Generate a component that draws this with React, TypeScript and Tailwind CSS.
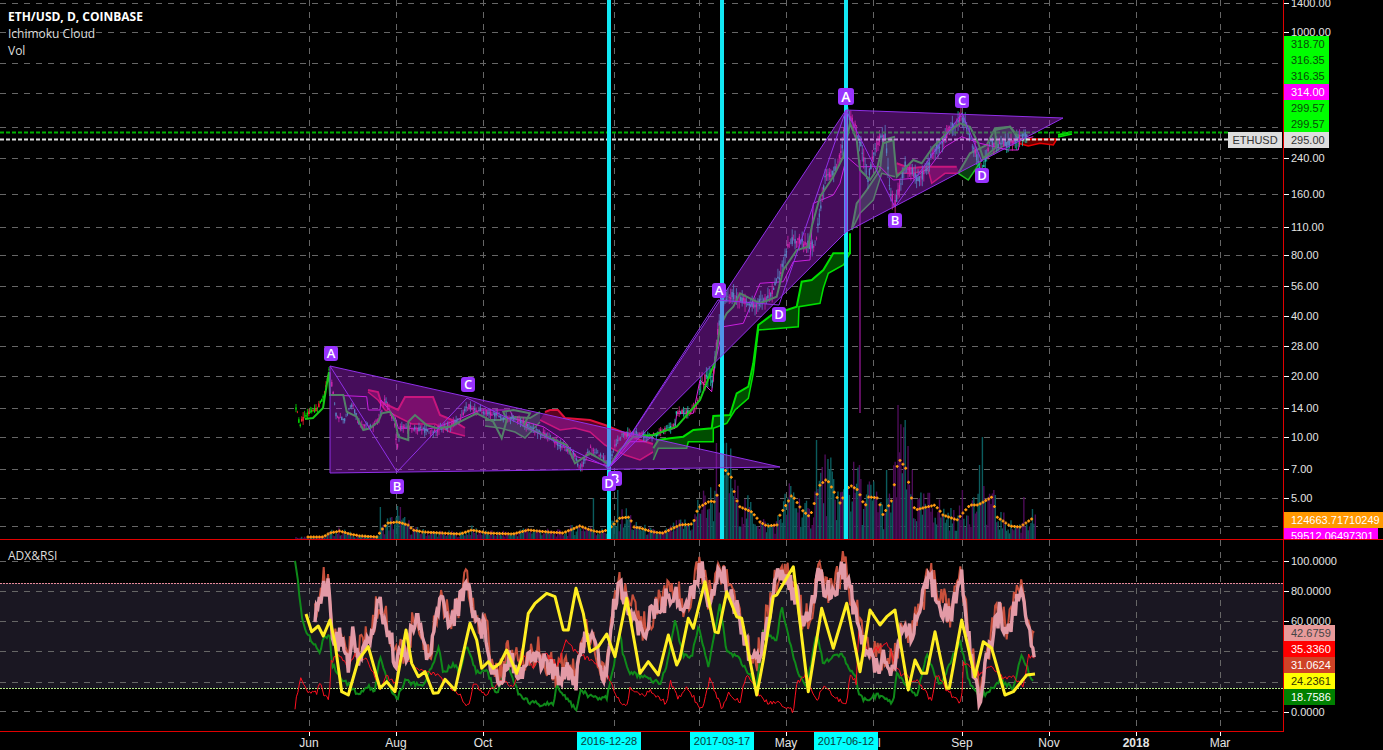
import { useMemo } from 'react';

type Pt = [number, number];

const PRICE_TICKS: [string, number][] = [
  ['1400.00', 3], ['1000.00', 32], ['240.00', 158], ['160.00', 194], ['110.00', 227], ['80.00', 255],
  ['56.00', 286], ['40.00', 316], ['28.00', 346], ['20.00', 376], ['14.00', 408], ['10.00', 437],
  ['7.00', 469], ['5.00', 498],
];
const PRICE_GRID = [3, 32, 63, 93, 127, 158, 194, 227, 255, 286, 316, 346, 376, 408, 437, 469, 498, 526];
const TIME_GRID = [309, 396, 483, 614, 699, 786, 873, 962, 1049, 1136, 1220];
const INDICATOR_TICKS: [string, number][] = [['100.0000', 561], ['80.0000', 591], ['60.0000', 621], ['0.0000', 712]];
const INDICATOR_GRID = [561, 591, 621, 651, 682, 711];
const TIME_LABELS: [string, number, boolean][] = [
  ['Jun', 309, false], ['Aug', 396, false], ['Oct', 483, false], ['May', 786, false], ['Jul', 873, false],
  ['Sep', 962, false], ['Nov', 1049, false], ['2018', 1136, true], ['Mar', 1220, false],
];
const TIME_TAGS: [string, number][] = [['2016-12-28', 577], ['2017-03-17', 690], ['2017-06-12', 814]];
const CYAN_LINES = [609, 722, 846];

const PRICE_TAGS = [
  { text: '318.70', top: 36, bg: 'bg-[#00ff00]', fg: 'text-[#0a4a0a]' },
  { text: '316.35', top: 52, bg: 'bg-[#00ff00]', fg: 'text-[#0a4a0a]' },
  { text: '316.35', top: 68, bg: 'bg-[#00ff00]', fg: 'text-[#0a4a0a]' },
  { text: '314.00', top: 84, bg: 'bg-[#ff00ff]', fg: 'text-white' },
  { text: '299.57', top: 100, bg: 'bg-[#00ff00]', fg: 'text-[#0a4a0a]' },
  { text: '299.57', top: 116, bg: 'bg-[#00ff00]', fg: 'text-[#0a4a0a]' },
  { text: '295.00', top: 132, bg: 'bg-[#dedede]', fg: 'text-[#333333]' },
];
const INDICATOR_TAGS = [
  { text: '42.6759', top: 85, bg: 'bg-[#e89a9a]', fg: 'text-[#444444]' },
  { text: '35.3360', top: 101, bg: 'bg-[#ff0000]', fg: 'text-white' },
  { text: '31.0624', top: 117, bg: 'bg-[#cf4327]', fg: 'text-white' },
  { text: '24.2361', top: 133, bg: 'bg-[#ffff00]', fg: 'text-[#333300]' },
  { text: '18.7586', top: 149, bg: 'bg-[#008000]', fg: 'text-white' },
];

const PATTERN_LABELS: [string, number, number][] = [
  ['A', 331, 353], ['B', 397, 486], ['C', 468, 384], ['B', 615, 478], ['D', 609, 483], ['A', 719, 290],
  ['D', 779, 314], ['B', 895, 220], ['C', 962, 100], ['D', 982, 175],
];

const PRICE: Pt[] = [
  [296, 408], [300, 425], [305, 415], [310, 412], [318, 408], [325, 392], [329, 370], [332, 385], [336, 415],
  [345, 420], [352, 405], [360, 425], [372, 428], [380, 418], [385, 400], [395, 425], [397, 450], [400, 428],
  [415, 428], [430, 432], [445, 428], [460, 420], [467, 405], [475, 410], [490, 413], [505, 418], [520, 420],
  [530, 428], [545, 435], [560, 445], [575, 455], [580, 470], [590, 448], [600, 455], [609, 465], [615, 445],
  [622, 435], [635, 433], [650, 437], [665, 430], [675, 425], [676, 412], [690, 412], [697, 405], [700, 385],
  [708, 375], [712, 380], [715, 360], [718, 330], [722, 305], [730, 295], [745, 300], [755, 305], [765, 298],
  [770, 295], [780, 275], [790, 240], [800, 240], [805, 245], [815, 245], [820, 210], [825, 180], [835, 170],
  [842, 150], [846, 112], [855, 125], [862, 150], [868, 180], [875, 145], [885, 135], [890, 190], [895, 205],
  [905, 165], [920, 180], [925, 170], [935, 150], [950, 130], [962, 115], [975, 150], [982, 175], [990, 140],
  [1000, 145], [1015, 140], [1028, 135],
];

const z4 = (pts: Pt[]): Pt[] => pts.map(([x, y]) => [280 + x / 3, 340 + y / 3]);
const z5 = (pts: Pt[]): Pt[] => pts.map(([x, y]) => [620 + x / 3, 80 + y / 3]);
const z6 = (pts: Pt[]): Pt[] => pts.map(([x, y]) => [280 + x / 3, 540 + y / 3]);
const z7 = (pts: Pt[]): Pt[] => pts.map(([x, y]) => [660 + x / 3, 540 + y / 3]);

const LAGGING: Pt[] = [
  [305, 419], [313, 418], [323, 408], [327, 383], [329, 372],
  ...z4([[150, 165], [190, 165], [200, 215], [230, 230], [250, 270], [270, 265], [295, 245], [305, 220], [330, 215],
    [345, 240], [355, 290], [385, 300], [385, 245], [405, 225], [440, 255], [470, 265], [510, 260], [560, 235],
    [590, 220], [640, 245], [665, 295], [680, 240], [670, 215], [700, 210], [750, 220], [730, 258], [800, 290],
    [860, 315], [885, 370], [930, 340], [965, 360], [990, 375], [1020, 330], [1060, 290]]),
  ...z5([[100, 1065], [170, 1040], [240, 960], [285, 845], [300, 740], [320, 700], [340, 680], [360, 640], [420, 670],
    [470, 650], [490, 570], [530, 510], [565, 500], [575, 440], [600, 350], [640, 290], [670, 230], [690, 130],
    [710, 180], [720, 270], [750, 300], [770, 270], [790, 190], [820, 180], [830, 290], [880, 240], [905, 250],
    [940, 200], [980, 160], [1020, 130], [1050, 140], [1075, 190], [1090, 235], [1130, 200], [1125, 150], [1170, 140], [1195, 170]]),
];

const KIJUN: Pt[] = [
  ...z4([[155, 165], [260, 170], [265, 210], [300, 210], [303, 180], [345, 230], [355, 265], [410, 265], [430, 270],
    [470, 262], [530, 240], [600, 210], [690, 210], [700, 235], [790, 260], [850, 300], [890, 350], [990, 380]]),
  ...z5([[30, 1085], [75, 1085], [110, 1060], [165, 1045], [170, 1000], [220, 1000], [240, 900], [275, 935], [285, 850],
    [310, 740], [370, 730], [420, 610], [490, 605], [520, 545], [570, 540], [580, 370], [640, 345], [660, 310],
    [680, 230], [715, 260], [780, 260], [820, 300], [880, 295], [930, 260], [975, 200], [1025, 170], [1080, 190],
    [1165, 210], [1195, 210], [1200, 180], [1240, 170]]),
];

const RED_CLOUD = { stroke: '#e0103c', fill: '#5a0420' };
const GREEN_INNER = { stroke: '#20c020', fill: '#0a4010' };
const CLOUDS: { top: Pt[]; bottom: Pt[]; stroke: string; fill: string }[] = [
  {
    top: [[368, 390], [378, 392], [381, 402], [398, 410], [405, 397], [433, 397], [440, 415], [452, 420], [465, 428]],
    bottom: [[368, 392], [378, 400], [385, 410], [400, 418], [412, 424], [435, 424], [450, 432], [465, 436]],
    ...RED_CLOUD,
  },
  {
    top: [[485, 420], [500, 420], [515, 417], [530, 418], [540, 412]],
    bottom: [[485, 426], [500, 428], [515, 432], [525, 438], [540, 422]],
    ...GREEN_INNER,
  },
  {
    top: [[545, 412], [550, 410], [558, 410], [565, 418], [590, 420], [605, 425], [622, 432], [640, 440], [653, 444]],
    bottom: [[540, 420], [560, 430], [575, 428], [590, 432], [605, 445], [625, 455], [640, 460], [653, 452]],
    ...RED_CLOUD,
  },
  {
    top: z5([[100, 1105], [115, 1080], [150, 1075], [190, 1070], [220, 1050], [275, 1045], [280, 1008], [330, 1005], [350, 940], [385, 920], [400, 850], [415, 735], [455, 705], [530, 680], [545, 605], [575, 600], [610, 570], [640, 520], [690, 520], [690, 460]]),
    bottom: z5([[100, 1140], [115, 1105], [200, 1105], [205, 1085], [280, 1085], [280, 1045], [320, 1030], [345, 990], [385, 955], [400, 880], [415, 750], [535, 740], [537, 680], [600, 670], [610, 625], [625, 580], [670, 555], [690, 520]]),
    stroke: '#00e000', fill: '#004d00',
  },
  {
    top: z5([[695, 450], [710, 370], [740, 330], [780, 270], [790, 180], [825, 170]]),
    bottom: z5([[695, 450], [720, 400], [760, 360], [785, 280], [825, 290]]),
    ...GREEN_INNER,
  },
  {
    top: z5([[830, 250], [870, 265], [915, 260], [1010, 260]]),
    bottom: z5([[830, 280], [880, 280], [925, 270], [935, 310], [975, 280], [1020, 280]]),
    ...RED_CLOUD,
  },
  {
    top: z5([[1015, 280], [1050, 220], [1100, 195], [1125, 145], [1170, 140], [1195, 175]]),
    bottom: z5([[1015, 280], [1045, 300], [1085, 240], [1135, 210], [1165, 185], [1195, 180]]),
    ...GREEN_INNER,
  },
  {
    top: z5([[1195, 178], [1230, 178], [1310, 178]]),
    bottom: z5([[1195, 190], [1225, 198], [1260, 190], [1300, 195], [1310, 178]]),
    stroke: '#ee0000', fill: '#600000',
  },
  {
    top: [[1058, 135], [1072, 132]],
    bottom: [[1058, 137], [1072, 134]],
    stroke: '#00e000', fill: '#004d00',
  },
];

const SMA: Pt[] = [
  [308, 537], [323, 537], [330, 533], [340, 531], [350, 534], [360, 536], [377, 537], [383, 528], [388, 523], [398, 522],
  [408, 525], [413, 530], [423, 532], [440, 533], [460, 534], [472, 530], [487, 533], [513, 534], [528, 530], [547, 532],
  [563, 533], [580, 526], [593, 531], [600, 532], [608, 530], [620, 518], [630, 517], [633, 527], [640, 528], [653, 532],
  [663, 533], [680, 525], [693, 524], [698, 508], [710, 501], [715, 502], [720, 485], [725, 470], [732, 478], [735, 497],
  [740, 507], [752, 512], [760, 522], [767, 526], [777, 525], [780, 515], [792, 495], [802, 510], [810, 517], [820, 485],
  [827, 479], [833, 490], [840, 503], [850, 485], [858, 490], [865, 507], [868, 497], [878, 498], [883, 515], [892, 500],
  [897, 467], [899, 459], [907, 470], [910, 493], [915, 510], [927, 507], [935, 505], [943, 515], [957, 520], [970, 505],
  [978, 505], [992, 497], [997, 517], [1010, 526], [1020, 527], [1033, 518],
];

const VOLUME_PEAKS: Pt[] = [
  [381, 507], [398, 506], [400, 507], [593, 498], [618, 490], [717, 443], [725, 475], [817, 440], [846, 470], [898, 405],
  [905, 420], [860, 465], [983, 437], [980, 465], [912, 470], [886, 470], [963, 490], [822, 467], [1024, 497],
];

const YELLOW: Pt[] = [
  ...z6([[78, 222], [95, 275], [115, 258], [130, 288], [150, 240], [165, 310], [185, 455], [205, 465], [235, 360], [265, 320],
    [300, 445], [320, 425], [345, 455], [378, 270], [395, 370], [415, 410], [435, 395], [460, 460], [475, 458], [495, 418],
    [525, 450], [545, 360], [570, 250], [590, 300], [605, 385], [625, 365], [640, 385], [660, 370], [680, 330], [710, 400],
    [725, 355], [745, 220], [765, 190], [800, 160], [825, 170], [850, 270], [865, 270], [888, 145], [910, 220], [930, 335],
    [955, 320], [980, 282], [1005, 350], [1040, 175], [1080, 400], [1105, 365], [1135, 405], [1165, 285], [1190, 375]]),
  ...z7([[60, 355], [85, 235], [100, 265], [135, 125], [165, 275], [175, 278], [200, 155], [230, 230], [245, 235], [290, 465],
    [310, 360], [340, 170], [350, 165], [400, 80], [445, 455], [485, 205], [520, 325], [560, 190], [600, 395], [630, 210],
    [660, 255], [680, 230], [705, 210], [745, 450], [765, 360], [785, 400], [800, 400], [825, 275], [860, 445], [868, 445],
    [905, 240], [945, 410], [970, 305], [995, 325], [1035, 465], [1060, 455], [1100, 405], [1125, 402]]),
];

const PINK: Pt[] = [
  ...z6([[105, 240], [125, 150], [145, 120], [152, 250], [165, 300], [185, 290], [205, 380], [220, 280], [235, 350], [270, 300],
    [300, 180], [325, 280], [350, 360], [385, 320], [410, 230], [430, 300], [450, 370], [478, 170], [510, 240], [535, 200],
    [558, 120], [590, 240], [620, 280], [635, 380], [660, 420], [690, 340], [720, 400], [760, 340], [800, 370], [830, 410],
    [860, 380], [890, 420], [920, 260], [950, 340], [975, 420], [995, 250], [1015, 130], [1040, 180], [1080, 280], [1120, 220],
    [1160, 180]]),
  ...z7([[0, 230], [20, 140], [45, 170], [80, 210], [120, 75], [145, 180], [180, 90], [230, 200], [270, 340], [290, 370],
    [320, 240], [360, 90], [410, 170], [430, 250], [450, 250], [475, 90], [510, 170], [550, 85], [590, 230], [615, 340],
    [650, 370], [680, 340], [700, 400], [720, 280], [760, 270], [810, 120], [870, 240], [905, 100], [925, 300], [958, 470],
    [990, 310], [1020, 210], [1040, 290], [1060, 210], [1085, 160], [1105, 270], [1125, 320]]),
];

const GREEN: Pt[] = [
  ...z6([[45, 60], [55, 130], [65, 230], [75, 270], [95, 300], [120, 340], [130, 300], [150, 290], [155, 370], [175, 400],
    [200, 430], [235, 465], [260, 440], [285, 450], [300, 340], [320, 420], [350, 480], [375, 420], [400, 430], [430, 440],
    [478, 320], [490, 400], [520, 370], [540, 400], [560, 310], [590, 400], [620, 390], [650, 465], [680, 370], [720, 470],
    [760, 490], [820, 495], [830, 440], [860, 480], [890, 505], [900, 455], [940, 470], [980, 475], [1000, 380], [1020, 280],
    [1030, 350], [1050, 400], [1090, 410], [1140, 430], [1160, 380]]),
  ...z7([[0, 430], [20, 380], [45, 240], [70, 350], [95, 350], [115, 260], [145, 385], [180, 190], [200, 340], [235, 350],
    [290, 440], [310, 270], [350, 300], [365, 200], [410, 390], [440, 440], [470, 280], [490, 370], [540, 340], [570, 385],
    [590, 420], [595, 460], [620, 485], [650, 465], [700, 490], [710, 400], [770, 470], [800, 340], [840, 440], [900, 300],
    [925, 420], [960, 470], [990, 450], [1020, 420], [1060, 445], [1085, 340], [1120, 430]]),
];

const RED: Pt[] = [
  ...z6([[45, 515], [50, 465], [62, 415], [80, 450], [110, 460], [120, 425], [135, 470], [148, 485], [152, 370], [175, 340],
    [200, 380], [230, 340], [265, 365], [300, 450], [320, 405], [350, 440], [358, 330], [385, 365], [410, 390], [460, 400],
    [490, 420], [530, 455], [565, 500], [580, 430], [620, 465], [660, 420], [700, 440], [730, 350], [760, 380], [800, 340],
    [830, 380], [860, 300], [890, 340], [930, 360], [980, 400], [1020, 490], [1040, 498], [1050, 445], [1090, 465], [1110, 455],
    [1160, 490], [1170, 420], [1190, 470]]),
  ...z7([[0, 480], [20, 490], [30, 420], [50, 480], [80, 440], [125, 510], [150, 415], [185, 505], [205, 460], [240, 485],
    [260, 395], [285, 440], [310, 485], [355, 490], [400, 512], [410, 430], [440, 405], [470, 490], [490, 435], [560, 500],
    [570, 400], [590, 430], [595, 260], [625, 340], [680, 310], [720, 400], [780, 430], [815, 485], [830, 400], [860, 450],
    [895, 485], [905, 485], [910, 370], [960, 400], [990, 375], [1020, 410], [1060, 410], [1090, 440], [1105, 345], [1125, 360]]),
];

// deterministic noise so the picture is the same on every run
const noise = (i: number) => {
  const v = Math.sin(i * 12.9898) * 43758.5453;
  return v - Math.floor(v);
};

const interp = (pts: Pt[], x: number) => {
  for (let i = 1; i < pts.length; i++) {
    if (x <= pts[i][0]) {
      const [x0, y0] = pts[i - 1];
      const [x1, y1] = pts[i];
      return y0 + ((y1 - y0) * (x - x0)) / Math.max(x1 - x0, 0.01);
    }
  }
  return pts[pts.length - 1][1];
};

const toPath = (pts: Pt[]) => pts.map(([x, y], i) => `${i ? 'L' : 'M'}${x.toFixed(1)} ${y.toFixed(1)}`).join('');

const jagged = (pts: Pt[], amount: number, seed: number) => {
  const out: Pt[] = [];
  const last = pts[pts.length - 1][0];
  for (let x = pts[0][0], i = 0; x <= last; x += 1.45, i++) {
    out.push([x, interp(pts, x) + (noise(i + seed) - 0.5) * amount]);
  }
  return out;
};

function PriceChart() {
  const candles = useMemo(() => {
    const out: { x: number; hi: number; lo: number; open: number; close: number; up: boolean }[] = [];
    let i = 0;
    for (let x = 296; x <= 1028; x += 1.43, i++) {
      const y = interp(PRICE, x);
      const size = x > 700 ? 9 : 5;
      const up = noise(i + 3) > 0.45;
      const open = y + (noise(i + 11) - 0.5) * size;
      const close = y + (noise(i + 23) - 0.5) * size;
      out.push({ x, open, close, up, hi: Math.min(open, close) - noise(i + 31) * size, lo: Math.max(open, close) + noise(i + 47) * size });
    }
    return out;
  }, []);

  const volumes = useMemo(() => {
    const out: { x: number; top: number; up: boolean }[] = [];
    let i = 0;
    for (let x = 296; x <= 1036; x += 1.43, i++) {
      const base = 539 - interp(SMA, Math.max(x, 308));
      let h = base * (0.35 + noise(i + 71) * 1.2);
      const peak = VOLUME_PEAKS.find((p) => Math.abs(p[0] - x) < 0.75);
      if (peak) h = 539 - peak[1];
      out.push({ x, top: 539 - h, up: noise(i + 97) > 0.5 });
    }
    return out;
  }, []);

  const smaMarks = useMemo(() => {
    let d = '';
    for (let x = 308; x <= 1033; x += 2.86) {
      const y = interp(SMA, x);
      d += `M${(x - 1.5).toFixed(1)} ${y.toFixed(1)}h3M${x.toFixed(1)} ${(y - 1.5).toFixed(1)}v3`;
    }
    return d;
  }, []);

  return (
    <svg viewBox="0 0 1283 539" className="absolute inset-0 h-full w-full">
      {PRICE_GRID.map((y) => (
        <line key={y} x1={0} x2={1283} y1={y + 0.5} y2={y + 0.5} stroke="#666" strokeDasharray="6 6" />
      ))}
      {TIME_GRID.map((x) => (
        <line key={x} x1={x + 0.5} x2={x + 0.5} y1={0} y2={539} stroke="#666" strokeDasharray="6 6" />
      ))}

      {volumes.map((v, i) => (
        <line key={i} x1={v.x} x2={v.x} y1={v.top} y2={539} stroke={v.up ? '#0b5c5e' : '#4d0c58'} strokeWidth={1.4} />
      ))}
      <path d={smaMarks} stroke="#ff9a10" strokeWidth={1.4} fill="none" />

      {CLOUDS.map((c, i) => (
        <g key={i}>
          <path d={`${toPath(c.top)}${toPath([...c.bottom].reverse()).replace('M', 'L')}Z`} fill={c.fill} />
          <path d={toPath(c.top)} stroke={c.stroke} strokeWidth={2} fill="none" />
          <path d={toPath(c.bottom)} stroke={c.stroke} strokeWidth={1.5} fill="none" />
        </g>
      ))}

      <path d="M860 160V413" stroke="#a01aa0" strokeWidth={1.2} />
      <path d={toPath(KIJUN)} stroke="#e020e0" strokeWidth={1} fill="none" />
      {candles.map((c, i) => (
        <g key={i} stroke={c.up ? (c.x < 330 ? '#00e000' : '#20c8b0') : c.x < 330 ? '#ff2030' : '#e82890'}>
          <line x1={c.x} x2={c.x} y1={c.hi} y2={c.lo} strokeWidth={0.8} />
          <line x1={c.x} x2={c.x} y1={c.open} y2={c.close} strokeWidth={1.3} />
        </g>
      ))}
      <path d={toPath(LAGGING)} stroke="#18c818" strokeWidth={2} fill="none" />

      <path d="M0 132.5H1228" stroke="#00b000" strokeWidth={2} strokeDasharray="4 2" />
      <path d="M0 139.5H1228" stroke="#e0e0e0" strokeWidth={2} strokeDasharray="4 2" />

      {CYAN_LINES.map((x) => (
        <line key={x} x1={x} x2={x} y1={0} y2={539} stroke="#12e8f4" strokeWidth={4} />
      ))}

      <g stroke="#9030e8" strokeWidth={1}>
        <path d="M330 366L780 467L330 473Z" fill="#a820d8" fillOpacity={0.42} />
        <path d="M330 366L397 472L467 398L609 468" fill="none" />
        <path d="M609 468L846 110V232Z" fill="#a820d8" fillOpacity={0.42} />
        <path d="M609 468L718 300L779 305L846 110" fill="none" />
        <path d="M846 110L1063 118L846 232Z" fill="#a820d8" fillOpacity={0.42} />
        <path d="M846 110L895 207L962 113L982 162" fill="none" />
      </g>
    </svg>
  );
}

function IndicatorChart() {
  const pink = useMemo(() => jagged(PINK, 26, 200), []);
  const rust = useMemo(() => jagged(PINK.map(([x, y]) => [x, y - 4] as Pt), 34, 400), []);
  const green = useMemo(() => jagged(GREEN, 5, 600), []);
  const red = useMemo(() => jagged(RED, 5, 800), []);

  return (
    <svg viewBox="0 540 1283 191" className="absolute inset-0 h-full w-full">
      <rect x={0} y={583} width={1283} height={105} fill="#1a1722" />
      {INDICATOR_GRID.map((y) => (
        <line key={y} x1={0} x2={1283} y1={y + 0.5} y2={y + 0.5} stroke="#666" strokeDasharray="6 6" />
      ))}
      {TIME_GRID.map((x) => (
        <line key={x} x1={x + 0.5} x2={x + 0.5} y1={540} y2={731} stroke="#666" strokeDasharray="6 6" />
      ))}
      <path d="M0 583.5H1283" stroke="#e88a9a" strokeDasharray="2 1" />
      <path d="M0 688.5H1283" stroke="#b6e88a" strokeDasharray="2 1" />

      <path d={toPath(rust)} stroke="#c8503c" strokeWidth={2} fill="none" />
      <path d={toPath(green)} stroke="#0f8a1a" strokeWidth={2} fill="none" />
      <path d={toPath(red)} stroke="#ff1020" strokeWidth={1} fill="none" />
      <path d={toPath(pink)} stroke="#e39aa6" strokeWidth={3.4} fill="none" />
      <path d={toPath(YELLOW)} stroke="#ffee22" strokeWidth={3} fill="none" strokeLinejoin="round" />
    </svg>
  );
}

function AxisTick({ y, text }: { y: number; text: string }) {
  return (
    <div className="absolute left-0 flex h-4 items-center" style={{ top: y - 8 }}>
      <span className="h-px w-[5px] bg-white" />
      <span className="ml-[2px] text-[11px] text-[#e4e4e4]">{text}</span>
    </div>
  );
}

function AxisTag({ text, top, bg, fg, w }: { text: string; top: number; bg: string; fg: string; w: string }) {
  return (
    <div className={`absolute left-0 flex h-4 items-center pl-[7px] text-[11px] ${w} ${bg} ${fg}`} style={{ top }}>
      {text}
    </div>
  );
}

export default function App() {
  return (
    <div className="flex h-[750px] w-[1383px] flex-col overflow-hidden bg-black font-['Liberation_Sans',Arial,sans-serif]">
      <div className="flex h-[540px] border-b border-[#e00000]">
        <div className="relative w-[1283px] overflow-hidden">
          <PriceChart />
          <div className="relative flex flex-col gap-px pl-2 pt-[9px] font-['Open_Sans',sans-serif] text-[12px] leading-4 text-[#dddddd]">
            <span className="font-bold text-white">ETH/USD, D, COINBASE</span>
            <span>Ichimoku Cloud</span>
            <span>Vol</span>
          </div>
          {PATTERN_LABELS.map(([label, x, y], i) => (
            <div
              key={i}
              className="absolute flex h-[15px] w-[14px] items-center justify-center rounded-[3px] bg-[#9933ff] font-['Open_Sans',sans-serif] text-[13px] font-semibold text-white"
              style={{ left: x - 7, top: y - 7 }}
            >
              {label}
            </div>
          ))}
          <div className="absolute left-[838px] top-[88px] flex h-[17px] w-4 items-center justify-center rounded-[3px] bg-[#9933ff] font-['Open_Sans',sans-serif] text-[14px] font-semibold text-white">
            A
          </div>
          <div className="absolute left-[1228px] top-[132px] flex h-4 w-[54px] items-center justify-center bg-[#dedede] text-[11px] text-[#333333]">
            ETHUSD
          </div>
        </div>
        <div className="relative flex-1 overflow-hidden border-l border-[#e00000]">
          {PRICE_TICKS.map(([text, y]) => (
            <AxisTick key={text} y={y} text={text} />
          ))}
          {PRICE_TAGS.map((t, i) => (
            <AxisTag key={i} {...t} w="w-[45px]" />
          ))}
          <AxisTag text="124663.71710249" top={512} bg="bg-[#ff9800]" fg="text-white" w="w-[99px]" />
          <div className="absolute left-0 top-[528px] flex h-[16px] w-[94px] items-center bg-[#ff00ff] pl-[7px] text-[11px] text-white">
            59512.06497301
          </div>
        </div>
      </div>

      <div className="flex h-[192px]">
        <div className="relative w-[1283px] overflow-hidden border-b border-[#e00000]">
          <IndicatorChart />
          <div className="relative pl-2 pt-2 font-['Open_Sans',sans-serif] text-[12px] leading-4 text-[#dddddd]">ADX&amp;RSI</div>
        </div>
        <div className="relative flex-1 border-l border-[#e00000]">
          {INDICATOR_TICKS.map(([text, y]) => (
            <AxisTick key={text} y={y - 540} text={text} />
          ))}
          {INDICATOR_TAGS.map((t, i) => (
            <AxisTag key={i} {...t} w="w-[51px]" />
          ))}
        </div>
      </div>

      <div className="relative h-[18px] text-[12px] text-[#e4e4e4]">
        {TIME_GRID.map((x) => (
          <span key={x} className="absolute top-0 h-1 w-px bg-white" style={{ left: x }} />
        ))}
        {TIME_LABELS.map(([text, x, bold]) => (
          <span
            key={text}
            className={bold ? 'absolute top-[2px] -translate-x-1/2 font-bold' : 'absolute top-[2px] -translate-x-1/2'}
            style={{ left: x }}
          >
            {text}
          </span>
        ))}
        {TIME_TAGS.map(([text, x]) => (
          <span
            key={text}
            className="absolute top-0 flex h-[18px] w-16 items-center justify-center bg-[#00ffff] text-[11px] text-[#0a3a3a]"
            style={{ left: x }}
          >
            {text}
          </span>
        ))}
      </div>
    </div>
  );
}
